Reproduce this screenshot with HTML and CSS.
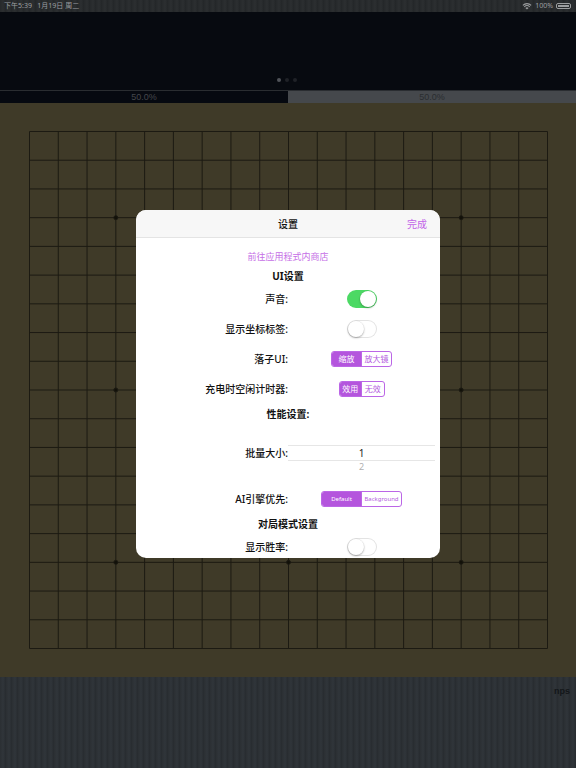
FILE: index.html
```html
<!DOCTYPE html>
<html lang="zh">
<head>
    <meta charset="UTF-8">
    <meta name="viewport" content="width=device-width, initial-scale=1.0">
    <title>设置</title>
    <link rel="stylesheet" href="styles.css">
</head>
<body>
    <div class="screen">
        <div class="statusbar">
            <span class="time">下午5:39&nbsp;&nbsp;&nbsp;1月19日 周二</span>
            <span class="status-right">
                <svg class="wifi" width="10" height="8" viewBox="0 0 10 8">
                    <path d="M5 7.6 L3.4 5.9 A2.3 2.3 0 0 1 6.6 5.9 Z" fill="#9c9ea0"/>
                    <path d="M2.3 4.8 A3.9 3.9 0 0 1 7.7 4.8" stroke="#9c9ea0" stroke-width="1.1" fill="none"/>
                    <path d="M0.9 3.3 A5.9 5.9 0 0 1 9.1 3.3" stroke="#9c9ea0" stroke-width="1.1" fill="none"/>
                </svg>
                <span>100%</span>
                <span class="battery"><span class="battery-fill"></span></span>
            </span>
        </div>

        <div class="topview">
            <div class="dots">
                <span class="dot active"></span>
                <span class="dot"></span>
                <span class="dot"></span>
            </div>
        </div>

        <div class="ratebar">
            <div class="rate rate-black">50.0%</div>
            <div class="rate rate-white">50.0%</div>
        </div>

        <div class="boardarea">
            <svg id="board" class="board" width="519" height="518" viewBox="0 0 519 518"></svg>
        </div>

        <div class="toolbar">
            <span class="nps">nps</span>
        </div>

        <div class="modal">
            <div class="modal-header">
                <span class="modal-title">设置</span>
                <span class="modal-done">完成</span>
            </div>
            <div class="modal-body">
                <div class="store-link">前往应用程式内商店</div>
                <div class="section-title">UI设置</div>

                <div class="row">
                    <div class="label">声音:</div>
                    <div class="control"><span class="toggle on"><span class="knob"></span></span></div>
                </div>
                <div class="row">
                    <div class="label">显示坐标标签:</div>
                    <div class="control"><span class="toggle"><span class="knob"></span></span></div>
                </div>
                <div class="row">
                    <div class="label">落子UI:</div>
                    <div class="control">
                        <span class="seg seg-move"><span class="on">缩放</span><span>放大镜</span></span>
                    </div>
                </div>
                <div class="row">
                    <div class="label">充电时空闲计时器:</div>
                    <div class="control">
                        <span class="seg seg-timer"><span class="on">效用</span><span>无效</span></span>
                    </div>
                </div>

                <div class="section-title">性能设置:</div>

                <div class="row row-picker">
                    <div class="label">批量大小:</div>
                    <div class="control picker">
                        <div class="picker-selected">1</div>
                        <div class="picker-next">2</div>
                    </div>
                </div>

                <div class="row">
                    <div class="label">AI引擎优先:</div>
                    <div class="control">
                        <span class="seg seg-engine"><span class="on">Default</span><span>Background</span></span>
                    </div>
                </div>

                <div class="section-title">对局模式设置</div>

                <div class="row">
                    <div class="label">显示胜率:</div>
                    <div class="control"><span class="toggle"><span class="knob"></span></span></div>
                </div>
            </div>
        </div>
    </div>

    <script>
        // draw the 19x19 goban lines and star points
        const board = document.getElementById('board');
        const stepX = 518 / 18;
        const stepY = 517 / 18;
        let svg = '';
        for (let i = 0; i < 19; i++) {
            const x = (0.5 + i * stepX).toFixed(2);
            const y = (0.5 + i * stepY).toFixed(2);
            svg += '<line x1="' + x + '" y1="0.5" x2="' + x + '" y2="517.5" />';
            svg += '<line x1="0.5" y1="' + y + '" x2="518.5" y2="' + y + '" />';
        }
        const stars = [3, 9, 15];
        stars.forEach(function(a) {
            stars.forEach(function(b) {
                svg += '<circle cx="' + (0.5 + a * stepX).toFixed(2) + '" cy="' + (0.5 + b * stepY).toFixed(2) + '" r="2" />';
            });
        });
        board.innerHTML = svg;
    </script>
</body>
</html>
```

FILE: styles.css
```css
body {
    margin: 0;
    font-family: "Noto Sans", "Noto Sans CJK SC", sans-serif;
    background-color: #070a10;
}

.screen {
    position: relative;
    width: 576px;
    height: 768px;
    overflow: hidden;
}

/* Status bar */
.statusbar {
    height: 12px;
    display: flex;
    justify-content: space-between;
    align-items: center;
    padding: 0 5px 0 4px;
    background: repeating-linear-gradient(90deg, #26292b 0, #2c2f31 3px, #232628 6px);
    color: #9c9ea0;
    font-size: 7px;
    line-height: 12px;
}

.status-right {
    display: flex;
    align-items: center;
    gap: 3px;
}

.battery {
    display: inline-block;
    width: 15px;
    height: 6px;
    border: 1px solid #9c9ea0;
    border-radius: 2px;
    padding: 1px;
    box-sizing: border-box;
}

.battery-fill {
    display: block;
    width: 100%;
    height: 100%;
    background-color: #9c9ea0;
}

/* Top view with page dots */
.topview {
    height: 78px;
    background-color: #070a10;
    border-bottom: 1px solid #2a2d31;
    display: flex;
    align-items: flex-end;
    justify-content: center;
}

.dots {
    display: flex;
    gap: 4px;
    margin-bottom: 8px;
    margin-right: 3px;
}

.dot {
    width: 4px;
    height: 4px;
    border-radius: 50%;
    background-color: #1f2227;
}

.dot.active {
    background-color: #505359;
}

/* Win rate bar */
.ratebar {
    height: 12px;
    display: flex;
    font-family: "Liberation Sans", sans-serif;
    font-size: 9px;
    line-height: 12px;
}

.rate {
    flex: 1;
    text-align: center;
}

.rate-black {
    background-color: #060910;
    color: #44474c;
}

.rate-white {
    background-color: #45484c;
    color: #2a2d30;
}

/* Board */
.boardarea {
    height: 574px;
    box-sizing: border-box;
    padding: 28px 0 0 29px;
    background-color: #3f3a28;
}

.board {
    display: block;
    stroke: #1c1a12;
    stroke-width: 1;
    fill: #121109;
}

/* Bottom toolbar */
.toolbar {
    height: 91px;
    background: repeating-linear-gradient(90deg, #2b2f33 0, #30353a 3px, #272b2f 6px);
    text-align: right;
    padding-right: 6px;
}

.nps {
    font-family: "Liberation Sans", sans-serif;
    font-size: 9px;
    font-weight: bold;
    color: #131619;
    line-height: 12px;
}

/* Settings modal */
.modal {
    position: absolute;
    top: 210px;
    left: 136px;
    width: 304px;
    height: 348px;
    border-radius: 10px;
    background-color: #fff;
    overflow: hidden;
}

.modal-header {
    position: relative;
    height: 27px;
    background-color: #f7f7f7;
    border-bottom: 1px solid #e4e4e4;
    text-align: center;
    line-height: 28px;
    font-size: 10px;
}

.modal-title {
    color: #111;
    font-weight: 500;
}

.modal-done {
    position: absolute;
    right: 13px;
    top: 0;
    color: #c264e8;
}

.modal-body {
    padding-top: 10px;
    color: #111;
    font-size: 10px;
}

.store-link {
    height: 18px;
    line-height: 18px;
    text-align: center;
    font-size: 9px;
    color: #c56ee6;
}

.section-title {
    height: 18px;
    line-height: 20px;
    text-align: center;
    font-weight: bold;
}

.row {
    display: grid;
    grid-template-columns: 152px 152px;
    height: 30px;
    align-items: center;
}

.label {
    text-align: right;
    line-height: 14px;
    font-weight: 500;
}

.control {
    display: flex;
    justify-content: center;
    padding-right: 5px;
}

/* Switch */
.toggle {
    position: relative;
    display: inline-block;
    width: 30px;
    height: 18px;
    border-radius: 9px;
    background-color: #fff;
    box-shadow: inset 0 0 0 1px #e3e3e3;
}

.toggle .knob {
    position: absolute;
    top: 1px;
    left: 1px;
    width: 16px;
    height: 16px;
    border-radius: 50%;
    background-color: #fff;
    box-shadow: 0 1px 2px rgba(0, 0, 0, 0.3), 0 0 0 0.5px rgba(0, 0, 0, 0.06);
}

.toggle.on {
    background-color: #4cd964;
    box-shadow: none;
}

.toggle.on .knob {
    left: 13px;
}

/* Segmented control */
.seg {
    display: inline-flex;
    height: 16px;
    box-sizing: border-box;
    border: 1px solid #bb66e6;
    border-radius: 3px;
    overflow: hidden;
    font-size: 8px;
    line-height: 14px;
    color: #b45ae0;
}

.seg span {
    flex: 1;
    text-align: center;
}

.seg span + span {
    border-left: 1px solid #bb66e6;
}

.seg .on {
    background-color: #b455dd;
    color: #fff;
}

.seg-move {
    width: 61px;
}

.seg-timer {
    width: 46px;
}

.seg-engine {
    width: 81px;
    font-size: 6px;
}

/* Picker */
.row-picker {
    height: 62px;
}

.picker {
    flex-direction: column;
    align-self: start;
    padding-top: 23px;
    padding-right: 5px;
}

.picker-selected {
    height: 14px;
    line-height: 14px;
    border-top: 1px solid #e6e6e6;
    border-bottom: 1px solid #e6e6e6;
    text-align: center;
    color: #222;
}

.picker-next {
    height: 12px;
    line-height: 12px;
    text-align: center;
    font-size: 9px;
    color: #b0b0b0;
}
```
